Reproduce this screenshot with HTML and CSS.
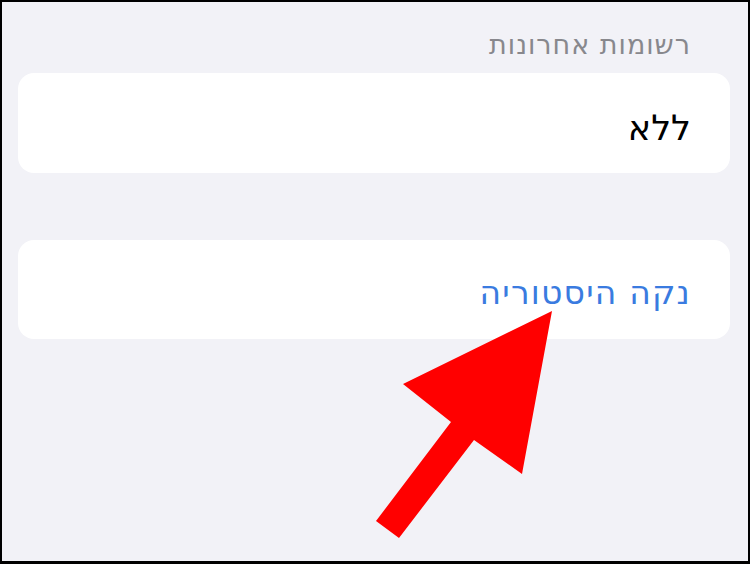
FILE: index.html
```html
<!DOCTYPE html>
<html lang="he" dir="rtl">
<head>
<meta charset="utf-8">
<link rel="stylesheet" href="styles.css">
</head>
<body>
<div class="frame">
  <div class="section-title">רשומות אחרונות</div>
  <div class="card card-first"><span class="value">ללא</span></div>
  <div class="card card-second"><span class="link">נקה היסטוריה</span></div>
  <svg class="arrow" width="750" height="564" viewBox="0 0 750 564">
    <polygon points="552,311 403,384 451,422 376,521 399,538 474,440 522,474" fill="#ff0000"/>
  </svg>
</div>
</body>
</html>
```
FILE: styles.css
```css
html, body {
  margin: 0;
  padding: 0;
}
body {
  font-family: "DejaVu Sans", sans-serif;
}
.frame {
  position: relative;
  width: 750px;
  height: 564px;
  box-sizing: border-box;
  border: 2px solid #000;
  border-bottom-width: 3px;
  background: #f2f2f7;
  padding: 0 18px 0 16px;
  overflow: hidden;
}
.section-title {
  color: #88888d;
  font-size: 27px;
  letter-spacing: 1px;
  line-height: 30px;
  padding: 28px 39px 0 0;
  height: 71px;
  box-sizing: border-box;
}
.card {
  background: #fff;
  border-radius: 16px;
  display: flex;
  align-items: center;
  box-sizing: border-box;
  padding-right: 39px;
}
.card-first {
  height: 100px;
}
.card-second {
  margin-top: 67px;
  height: 99px;
}
.value {
  font-size: 35px;
  color: #000;
  padding-top: 9px;
}
.link {
  font-size: 33px;
  letter-spacing: 1.2px;
  color: #3a7be0;
  padding-top: 5px;
}
.arrow {
  position: absolute;
  left: -2px;
  top: -2px;
  pointer-events: none;
}
```
